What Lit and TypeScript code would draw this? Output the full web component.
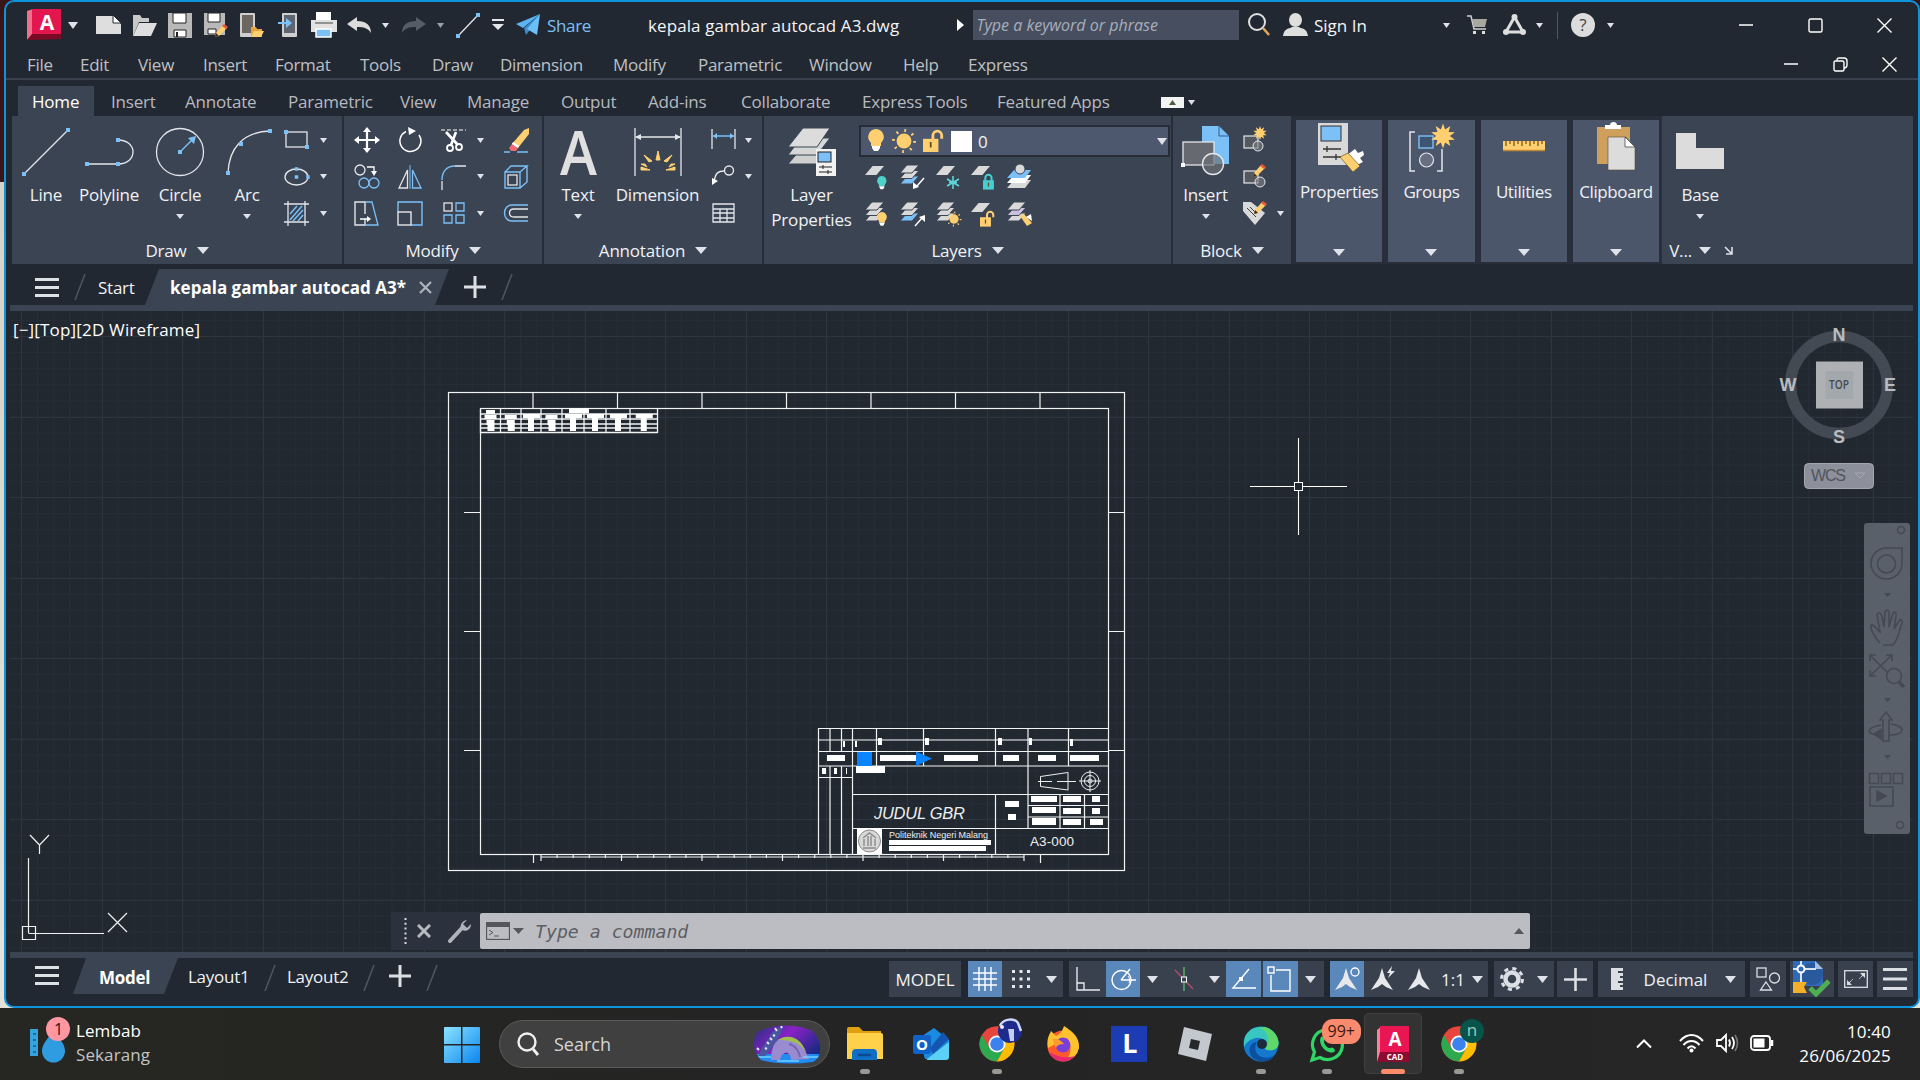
import { LitElement, html, svg, css, nothing } from 'lit';
import { customElement } from 'lit/decorators.js';

const BLUE = '#7cc0f8';
const WHITE = '#e4e6ea';
const GOLD = '#ffcf70';

const icon = (w: number, h: number, body: unknown) => html`
  <svg class="icon" width=${w} height=${h} viewBox="0 0 ${w} ${h}" fill="none" stroke-linecap="butt">${body}</svg>
`;

const caret = (w = 8, h = 5, color = '#dfe2e8') => icon(w, h, svg`<path d="M0 0H${w}L${w / 2} ${h}Z" fill=${color}/>`);

const dots = (points: number[][], size = 4) =>
  points.map(([x, y]) => svg`<rect x=${x - size / 2} y=${y - size / 2} width=${size} height=${size} fill=${BLUE}/>`);

const sheet = (x: number, y: number, w: number, h: number, fill = '#d9d9d9') =>
  svg`<path d="M${x + w * 0.4} ${y}H${x + w}L${x + w * 0.6} ${y + h}H${x}Z" fill=${fill}/>`;

const stack = (fills: string[], y = 1) =>
  [...fills].reverse().map((fill, i) => {
    const top = y + (fills.length - 1 - i) * 5.5;
    return svg`<path d="M8 ${top}H20L13 ${top + 8}H1Z" fill=${fill} stroke="#3b4453" stroke-width="1"/>`;
  });

const pencil = (x: number, y: number, s = 1) => svg`
  <g transform="translate(${x} ${y}) scale(${s})">
    <path d="M0 13L1 9L8 1L12 4L4 12Z" fill=${GOLD}/><path d="M7 2L9 0L13 3L11 5Z" fill="#e8583a"/><path d="M0 13L1 9L4 12Z" fill="#3a2c20"/>
  </g>`;

const star = (cx: number, cy: number, r: number) => {
  const pts = Array.from({ length: 20 }, (_, i) => {
    const a = (i * Math.PI) / 10 - Math.PI / 2;
    const d = i % 2 ? r * 0.55 : r;
    return `${cx + Math.cos(a) * d},${cy + Math.sin(a) * d}`;
  });
  return svg`<polygon points=${pts.join(' ')} fill=${GOLD}/>`;
};

const sun = (cx: number, cy: number, r: number) => svg`
  <circle cx=${cx} cy=${cy} r=${r * 0.62} fill=${GOLD}/>
  <circle cx=${cx} cy=${cy} r=${r * 0.88} stroke=${GOLD} stroke-width=${r * 0.24} stroke-dasharray="${r * 0.15} ${r * 0.541}"/>`;

const bulb = (x: number, y: number, s: number, fill: string) => svg`
  <g transform="translate(${x} ${y}) scale(${s})">
    <path d="M8 0a8 8 0 0 1 5 14v3H3v-3A8 8 0 0 1 8 0Z" fill=${fill}/><path d="M4 17h8v2l-2 3H6l-2-3Z" fill="#fff"/>
  </g>`;

const lock = (x: number, y: number, s: number, fill: string, open: boolean) => svg`
  <g transform="translate(${x} ${y}) scale(${s})">
    <path d=${open ? 'M9 9V5a4 4 0 0 1 8 0v3' : 'M3 9V5a4 4 0 0 1 8 0v4'} stroke=${fill} stroke-width="2.6"/>
    <rect y="8" width="14" height="12" fill=${fill}/><path d="M7 11v5" stroke="#5b4a2a" stroke-width="1.6"/>
  </g>`;

const ICONS = {
  appLogo: icon(34, 32, svg`
    <path d="M0 2L6 0V25L0 31Z" fill="#f0708c"/><path d="M5 0H34V26H5Z" fill="#e4164e"/><path d="M5 25H34V30L5 31H0Z" fill="#7a0a26"/>
    <text class="logo-a" x="20" y="21" text-anchor="middle" fill="#fff" font-size="21">A</text>`),
  newFile: icon(25, 20, svg`<path d="M0 1H17L25 9V19H0Z" fill="#dedede"/><path d="M17 0L25 8H17Z" fill="#fff" stroke="#222831"/>`),
  open: icon(25, 22, svg`<path d="M1 22V1H8L10 4H17V8H7Z" fill="#c8c8c8"/><path d="M7 9H25L19 22H1Z" fill="#dedede"/>`),
  save: icon(24, 25, svg`<path d="M0 0H24V25H0Z" fill="#b9b9b9"/><path d="M5 0H18V10H5Z" fill="#fff" stroke="#222"/><path d="M6 17H18V24H6Z" fill="#fff" stroke="#222"/><path d="M9 19v5" stroke="#222" stroke-width="2"/>`),
  saveAs: icon(25, 25, svg`<path d="M0 0H21V22H0Z" fill="#b9b9b9"/><path d="M4 0H16V9H4Z" fill="#fff" stroke="#222"/><path d="M4 16H12V21H4Z" fill="#fff" stroke="#222"/>${pencil(11, 11)}`),
  mobileOpen: icon(24, 25, svg`<rect width="15" height="24" rx="1" fill="#cfcfcf"/><rect x="2" y="2" width="11" height="18" fill="#6c6663"/><path d="M11 14H16L17 16H22V24H11Z" fill="#e8a33a"/><path d="M14 18H24L21 24H11Z" fill="#ffcf70"/>`),
  mobileSave: icon(20, 24, svg`<rect x="4" width="15" height="24" rx="1" fill="#cfcfcf"/><rect x="6" y="2" width="11" height="18" fill="#5e6470"/><path d="M0 9H8V5L14 10L8 15V11H0Z" fill=${BLUE}/>`),
  plot: icon(26, 26, svg`<path d="M5 0H20V8H5Z" fill="#fff"/><path d="M0 8H26V20H0Z" fill="#e2e2e2"/><path d="M4 11H22" stroke="#444"/><path d="M5 17H20V25H5Z" fill=${BLUE} stroke="#fff" stroke-width="1.5"/>`),
  undo: icon(25, 17, svg`<path d="M0 7L10 0V4C19 4 24 8 24 16C21 11 17 10 10 10V14Z" fill="#dcdcdc"/>`),
  redo: icon(25, 17, svg`<path d="M25 7L15 0V4C6 4 1 8 1 16C4 11 8 10 15 10V14Z" fill="#565c65"/>`),
  lineSmall: icon(25, 25, svg`<path d="M2 23L22 2" stroke=${WHITE} stroke-width="1.3"/>${dots([[2, 23], [22, 2]])}`),
  more: icon(12, 12, svg`<path d="M0 1H12" stroke=${WHITE} stroke-width="2"/><path d="M0 5H12L6 11Z" fill=${WHITE}/>`),
  plane: icon(24, 22, svg`<path d="M24 0L0 10L7 14Z" fill="#5cb4f2"/><path d="M24 0L8 14L10 21L13 17Z" fill="#3c8fd0"/><path d="M24 0L21 21L11 15Z" fill="#6cc0f8"/>`),
  flyout: icon(7, 12, svg`<path d="M0 0L7 6L0 12Z" fill="#fff"/>`),
  search: icon(22, 24, svg`<circle cx="9" cy="9" r="8" stroke="#e0e0e0" stroke-width="2"/><path d="M15 15L21 22" stroke="#e0a95a" stroke-width="2.5"/>`),
  user: icon(25, 24, svg`<ellipse cx="12.500" cy="7" rx="6.500" ry="7" fill="#dedede"/><path d="M0 23C1 15 6 16 9 14H16C19 16 24 15 25 23Z" fill="#dedede"/>`),
  cart: icon(21, 20, svg`<path d="M0 1H4L7 14H19" stroke="#cfcfcf" stroke-width="1.5"/><path d="M5 4H20L18 12H7Z" fill="#a8a8a0"/><rect x="6" y="16" width="3" height="3" fill="#ddd"/><rect x="15" y="16" width="3" height="3" fill="#ddd"/>`),
  appStore: icon(23, 22, svg`<path d="M11.500 3L3 18H20Z" stroke="#dedede" stroke-width="3"/><circle cx="11.500" cy="3" r="3" fill="#dedede"/><circle cx="3" cy="18" r="3" fill="#dedede"/><circle cx="20" cy="18" r="3" fill="#dedede"/>`),
  help: icon(24, 24, svg`<circle cx="12" cy="12" r="12" fill="#dcdcdc"/><text x="12" y="18" text-anchor="middle" font-size="17" fill="#444">?</text>`),
  min: icon(14, 2, svg`<path d="M0 1H14" stroke="#fff" stroke-width="1.6"/>`),
  max: icon(15, 15, svg`<rect x="1" y="1" width="13" height="13" rx="1.500" stroke="#fff" stroke-width="1.4"/>`),
  close: icon(15, 15, svg`<path d="M.5 .5L14.500 14.500M14.500 .5L.5 14.500" stroke="#fff" stroke-width="1.4"/>`),
  restore: icon(15, 15, svg`<rect x="1" y="4" width="10" height="10" rx="1.500" stroke="#fff" stroke-width="1.4"/><path d="M4 3.500C4 1 5 1 6 1H11C13 1 14 2 14 4V8C14 10 13 11 11 11" stroke="#fff" stroke-width="1.4"/>`),

  line: icon(52, 52, svg`<path d="M4 48L48 4" stroke=${WHITE} stroke-width="1.3"/>${dots([[4, 48], [48, 4]])}`),
  polyline: icon(52, 52, svg`<path d="M4 38H35C45 38 50 32 50 26S45 14 35 14" stroke=${WHITE} stroke-width="1.3"/>${dots([[4, 38], [35, 38], [35, 14]])}`),
  circle: icon(52, 52, svg`<circle cx="26" cy="26" r="23.500" stroke=${WHITE} stroke-width="1.3"/><path d="M26 26L38 14" stroke=${BLUE} stroke-width="1.5"/><path d="M34 12L42 10L40 18Z" fill=${BLUE}/>${dots([[26, 26]])}`),
  arc: icon(52, 52, svg`<path d="M7 47C8 22 22 6 49 5" stroke=${WHITE} stroke-width="1.3"/>${dots([[7, 47], [20, 18], [49, 5]])}`),
  rect: icon(28, 28, svg`<rect x="3" y="6" width="21" height="15" stroke=${WHITE} stroke-width="1.3"/>${dots([[3, 6], [24, 21]])}`),
  ellipse: icon(28, 28, svg`<ellipse cx="13.500" cy="14" rx="11.500" ry="8" stroke=${WHITE} stroke-width="1.3"/>${dots([[13.5, 6], [13.5, 14], [25, 14]], 3.5)}`),
  hatch: icon(28, 28, svg`<path d="M1 5H26M1 23H26M5 2V27M22 2V27" stroke=${WHITE} stroke-width="1.3"/><path d="M7 15L14 7M7 21L19 7M10 22L20 11M15 22L20 16" stroke=${BLUE} stroke-width="1.5"/>`),
  move: icon(26, 26, svg`<path d="M13 2V24M2 13H24" stroke="#fff" stroke-width="2.2"/><path d="M9 5L13 0L17 5ZM9 21L13 26L17 21ZM5 9L0 13L5 17ZM21 9L26 13L21 17Z" fill="#fff"/>`),
  rotate: icon(26, 26, svg`<path d="M9 4.500A10.500 10.500 0 1 0 22 8" stroke="#fff" stroke-width="1.5"/><path d="M11 0L19 4L12 8Z" fill="#fff"/>`),
  trim: icon(26, 26, svg`<path d="M0 3H25" stroke="#fff" stroke-dasharray="4 2"/><path d="M5 5L17 18M15 5L10 18" stroke="#fff" stroke-width="2.6"/><circle cx="9" cy="21" r="3" stroke="#fff" stroke-width="1.8"/><circle cx="18" cy="20" r="3" stroke="#fff" stroke-width="1.8"/>`),
  erase: icon(26, 26, svg`<path d="M9 17L21 3L26 1V7L15 21Z" fill=${GOLD}/><path d="M9 17L15 21L13 24H8L6 21Z" fill="#ef6a72"/><path d="M9.500 16L15.500 20" stroke="#fff" stroke-width="2.500"/><path d="M1 25H7M14 25H25" stroke=${BLUE} stroke-width="1.4"/>`),
  copy: icon(26, 26, svg`<circle cx="6" cy="6" r="5" stroke=${WHITE} stroke-width="1.3"/><circle cx="10" cy="19" r="5" stroke=${BLUE} stroke-width="1.3"/><circle cx="20" cy="19" r="5" stroke=${BLUE} stroke-width="1.3"/><path d="M13 3H20V8" stroke="#fff" stroke-width="1.3"/><path d="M17 7H23L20 12Z" fill="#fff"/>`),
  mirror: icon(26, 26, svg`<path d="M10.500 6V24H2Z" stroke=${WHITE} stroke-width="1.3"/><path d="M15.500 6V24H24Z" stroke=${BLUE} stroke-width="1.3"/><path d="M13 1V25" stroke=${BLUE}/>`),
  fillet: icon(26, 26, svg`<path d="M1 26V17M14 2H25" stroke=${WHITE} stroke-width="1.3"/><path d="M1 16C1 7 6 2 14 2" stroke=${BLUE} stroke-width="1.4"/>`),
  cube: icon(26, 26, svg`<path d="M2 8H17V24H2ZM2 8L8 2H24L17 8M24 2V18L17 24" stroke=${BLUE} stroke-width="1.4"/><rect x="5" y="11" width="9" height="10" stroke=${WHITE} stroke-width="1.3"/>`),
  stretch: icon(26, 26, svg`<path d="M11 19V25H1V2H11V14" stroke=${WHITE} stroke-width="1.4"/><path d="M11 2H18L24 25H11" stroke=${BLUE} stroke-width="1.3"/><path d="M6 19H15" stroke="#fff" stroke-width="1.3"/><path d="M13 16L17 19L13 22Z" fill="#fff"/>`),
  scale: icon(26, 26, svg`<path d="M1 12V2H25V25H14" stroke=${BLUE} stroke-width="1.4"/><rect x="1" y="12" width="13" height="13" stroke=${WHITE} stroke-width="1.4"/>`),
  array: icon(26, 26, svg`<rect x="3" y="3" width="8" height="8" stroke=${WHITE} stroke-width="1.3"/><path d="M15 3H23V11H15ZM3 15H11V23H3ZM15 15H23V23H15Z" stroke=${BLUE} stroke-width="1.3"/>`),
  offset: icon(26, 26, svg`<path d="M25 5H9C-1 5 -1 21 9 21H25" stroke=${BLUE} stroke-width="1.4"/><path d="M25 9H11C5 9 5 17 11 17H25" stroke=${WHITE} stroke-width="1.3"/>`),
  dimension: icon(52, 52, svg`<path d="M3 2V50M49 2V50M4 11H48" stroke=${WHITE} stroke-width="1.3"/><path d="M3 11L9 8V14ZM49 11L43 8V14Z" fill=${WHITE}/>
    <path d="M24 34L26 25L28 34ZM17 36L12 29L20 35ZM35 36L40 29L32 35ZM15 41L9 38L13 38ZM37 41L43 38L39 38ZM18 44H9V41ZM34 44H43V41Z" fill=${GOLD} stroke=${GOLD}/>`),
  dimSmall: icon(28, 26, svg`<path d="M3 2V22M26 2V22" stroke=${WHITE} stroke-width="1.3"/><path d="M4 9H25" stroke=${BLUE} stroke-width="1.3"/><path d="M4 9L8 6V12ZM25 9L21 6V12Z" fill=${BLUE}/>`),
  leader: icon(28, 26, svg`<path d="M5 19C6 8 10 7 15 7" stroke=${WHITE} stroke-width="1.4"/><circle cx="20" cy="6.500" r="4.500" stroke=${WHITE} stroke-width="1.4"/><path d="M3 21V14L9 17Z" fill="#fff"/>`),
  table: icon(28, 26, svg`<path d="M4 4H25V22H4ZM4 9H25M4 13H25M4 18H25M11 9V22M18 9V22" stroke=${WHITE} stroke-width="1.3"/>`),
  layerProps: icon(52, 52, svg`
    <path d="M15 23H44L31 38H2Z" fill="#cfcfcf" stroke="#3b4453"/><path d="M15 12H44L31 29H2Z" fill="#d6d6d6" stroke="#3b4453"/><path d="M17 2H44L31 21H2Z" fill="#dcdcdc" stroke="#3b4453"/>
    <rect x="30" y="23" width="20" height="27" fill="#f2f2f2"/><rect x="32" y="26" width="13" height="10" fill=${BLUE} stroke="#222"/><path d="M33 41H46M33 46H46M37 39V43M42 44V48" stroke="#222"/>`),
  insert: icon(52, 52, svg`
    <path d="M22 0H39L49 10V38H22Z" fill=${BLUE}/><path d="M39 0V10H49" stroke="#2a5f8f"/><rect x="3" y="16" width="31" height="23" fill="#66696f" stroke=${WHITE} stroke-width="1.3"/>
    <circle cx="33" cy="38" r="10.500" fill="#6d7077b0" stroke=${WHITE} stroke-width="1.4"/><rect x="1" y="37" width="4" height="4" fill="#fff"/>`),
  properties: icon(52, 52, svg`
    <path d="M5 1H35V43H5Z" fill="#d9d9d9"/><rect x="8" y="4" width="20" height="15" fill=${BLUE} stroke="#333"/><path d="M10 27H28M14 24V30M10 35H28M23 32V38" stroke="#333" stroke-width="1.3"/>
    <path d="M34 33L42 27L45 31L50 29L51 33L47 36L50 40L44 43Z" fill="#fff"/><path d="M27 35L35 31L47 44L40 50Z" fill=${GOLD} stroke="#6b5520" stroke-width=".7"/>`),
  groups: icon(52, 52, svg`
    <path d="M10 10H5V49H10M32 49H37V27" stroke=${WHITE} stroke-width="1.5"/><rect x="14" y="14" width="14" height="12" stroke=${BLUE} stroke-width="1.4" fill="#3e5470"/>
    <circle cx="21.500" cy="38" r="7" fill="#676f80" stroke=${WHITE} stroke-width="1.2"/>${star(38, 14, 12.5)}`),
  utilities: icon(52, 52, svg`<rect x="5" y="19" width="42" height="10" fill=${GOLD}/><path d="M5 28.500H47" stroke="#c08a34" stroke-width="1.5"/><path d="M8 19v5M12 19v3M16 19v5M20 19v3M24 19v5M28 19v3M32 19v5M36 19v3M40 19v5M44 19v3" stroke="#6b4b10" stroke-width="1.2"/>`),
  clipboard: icon(52, 52, svg`<path d="M7 5H40V42H7Z" fill="#cf9f5c"/><path d="M15 7V3H20C20 -1 27 -1 27 3H31V7Z" fill="#fff"/><path d="M18 15H36L45 25V48H18Z" fill="#dcdcdc" stroke="#5a4a3a" stroke-width=".6"/><path d="M35 15L45 25H35Z" fill="#fff" stroke="#333" stroke-width=".7"/>`),
  base: icon(52, 52, svg`<path d="M2 7H22V22H50V43H2Z" fill="#dcdcdc"/>`),
  blockNew: icon(28, 28, svg`<rect x="3" y="10" width="14" height="12" fill="#55585e" stroke=${WHITE} stroke-width="1.2"/><circle cx="17" cy="20" r="5" fill="#7a7d83a0" stroke=${WHITE}/>${star(19, 7, 7)}`),
  blockEdit: icon(28, 28, svg`<rect x="3" y="8" width="14" height="12" fill="#55585e" stroke=${WHITE} stroke-width="1.2"/><circle cx="19" cy="19" r="5" fill="#7a7d83a0" stroke=${WHITE}/>${pencil(12, 1)}`),
  blockAttr: icon(28, 28, svg`<path d="M2 3H10L24 14L14 26L2 12Z" fill="#d9d9d9"/><path d="M6 9L15 18M9 8L14 13" stroke="#444"/>${pencil(13, 2)}`),
};

const LAYER_TOOLS = [
  svg`${sheet(1, 2, 19, 9)}${bulb(13, 12, 0.6, '#4fd0c8')}`,
  svg`${stack(['#d9d9d9', '#d9d9d9', BLUE])}<path d="M25 14L18 22" stroke="#fff" stroke-width="1.5"/><path d="M14 25V18L20 23Z" fill="#fff"/>`,
  svg`${sheet(1, 2, 19, 9)}<path d="M18 12V25M12 15L24 22M24 15L12 22M14 18.500H22" stroke="#5fd4d4" stroke-width="1.6"/>`,
  svg`${sheet(1, 2, 19, 9)}${lock(13, 10, 0.78, '#45cfd0', false)}`,
  svg`<path d="M8 16H25L19 24H1Z" fill="#d9d9d9"/><path d="M8 11H25L19 19H1Z" fill="#fff"/><path d="M8 6H25L19 14H1Z" fill=${BLUE}/><circle cx="14" cy="5" r="5" fill="#d9d9d9" stroke="#3b4453"/>`,
  svg`${stack(['#d9d9d9', '#d9d9d9', '#d9d9d9'])}${bulb(13, 11, 0.62, GOLD)}`,
  svg`${stack(['#d9d9d9', '#d9d9d9', BLUE])}<path d="M16 25L23 17" stroke="#fff" stroke-width="1.5"/><path d="M20 16L26 14V21Z" fill="#fff"/>`,
  svg`${stack(['#d9d9d9', '#d9d9d9', '#d9d9d9'])}${sun(19, 18, 7.5)}`,
  svg`${sheet(1, 2, 19, 9)}${lock(10, 10, 0.78, GOLD, true)}`,
  svg`${stack(['#d9d9d9', '#cdbfe0', '#d9d9d9'])}<path d="M14 15L18 13L26 22L21 25Z" fill=${GOLD}/><path d="M20 16L25 13L26 20Z" fill="#fff"/>`,
];

const MENU = ['File', 'Edit', 'View', 'Insert', 'Format', 'Tools', 'Draw', 'Dimension', 'Modify', 'Parametric', 'Window', 'Help', 'Express'];
const RIBBON_TABS = ['Home', 'Insert', 'Annotate', 'Parametric', 'View', 'Manage', 'Output', 'Add-ins', 'Collaborate', 'Express Tools', 'Featured Apps'];

@customElement('title-bar')
class TitleBar extends LitElement {
  static styles = css`
    :host { display: block; font: 17px "Open Sans", sans-serif; color: #f4f5f7; }
    .icon { display: block; flex: none; }
    .logo-a { font: bold 21px "Open Sans", sans-serif; }
    .bar {
      display: grid;
      height: 46px;
      padding-left: 18px;
      align-items: center;
      justify-items: center;
      grid-template-columns:
        40px 18px 44px 36px 36px 36px 36px 36px 36px 35px 16px 41px 12px 44px 16px
        142px 301px 23px 267px 40px 155px 24px 38px 36px 14px 23px 28px 26px 92px 62px 76px 62px;
    }
    .bar > .icon:nth-child(3) { margin-left: 8px; }
    .share { display: flex; gap: 7px; align-items: center; color: #7cc0f8; justify-self: start; padding-left: 10px; letter-spacing: -.35px; }
    .file { justify-self: start; letter-spacing: .1px; white-space: nowrap; }
    .search {
      box-sizing: border-box;
      width: 266px;
      height: 30px;
      padding-left: 4px;
      background: #464e60;
      color: #a9aeba;
      font-style: italic;
      font-size: 16px;
      line-height: 30px;
      letter-spacing: 0;
    }
    .user { display: flex; gap: 6px; align-items: center; justify-self: start; padding-left: 4px; letter-spacing: 0; }
    .sep { width: 1px; height: 27px; background: #50565f; }
    .menu {
      box-sizing: border-box;
      display: grid;
      height: 32px;
      padding: 2px 4px 0 21px;
      align-items: center;
      border-bottom: 2px solid #3a4250;
      color: #bdc0c5;
      letter-spacing: -.28px;
      grid-template-columns: 53px 58px 65px 72px 85px 72px 68px 113px 85px 111px 94px 65px 1fr 49px 49px 32px;
    }
  `;

  render() {
    const i = ICONS;
    return html`
      <div class="bar">
        ${i.appLogo}${caret(10, 7)}${i.newFile}${i.open}${i.save}${i.saveAs}${i.mobileOpen}${i.mobileSave}${i.plot}
        ${i.undo}${caret(7, 5)}${i.redo}${caret(7, 5, '#9ba0a8')}${i.lineSmall}${i.more}
        <span class="share">${i.plane}Share</span>
        <span class="file">kepala gambar autocad A3.dwg</span>
        ${i.flyout}
        <div class="search">Type a keyword or phrase</div>
        ${i.search}
        <span class="user">${i.user}Sign In</span>
        ${caret(7, 5)}${i.cart}${i.appStore}${caret(7, 5)}<span class="sep"></span>${i.help}${caret(7, 5)}
        <span></span>${i.min}${i.max}${i.close}
      </div>
      <div class="menu">
        ${MENU.map((m) => html`<span>${m}</span>`)}${i.min}${i.restore}${i.close}
      </div>
    `;
  }
}

@customElement('ribbon-bar')
class RibbonBar extends LitElement {
  static styles = css`
    :host { display: block; font: 17px "Open Sans", sans-serif; color: #f0f2f5; letter-spacing: -.2px; }
    .icon { display: block; flex: none; }
    .tabs {
      display: grid;
      height: 36px;
      padding-left: 12px;
      align-items: end;
      color: #b6bac0;
      grid-template-columns: 86px 74px 103px 112px 67px 94px 87px 93px 121px 135px 171px 24px 18px;
    }
    .tab { height: 30px; line-height: 31px; padding-left: 7px; white-space: nowrap; }
    .tab.active { width: 76px; box-sizing: border-box; padding-left: 14px; background: #3b4453; color: #fff; }
    .collapse { display: grid; place-items: center; width: 23px; height: 11px; margin-bottom: 8px; background: #f3f3f3; }
    .tab-caret { padding: 0 0 11px 3px; }
    .panels { display: flex; height: 148px; margin-left: 6px; width: 1901px; background: #3b4453; }
    .panel { box-sizing: border-box; display: flex; flex-direction: column; height: 148px; border-right: 2px solid #262d38; }
    .body { display: flex; height: 116px; padding-top: 6px; }
    .foot { display: flex; gap: 10px; align-items: center; justify-content: center; height: 28px; padding-top: 1px; }
    .big { display: flex; flex-direction: column; align-items: center; flex: none; text-align: center; line-height: 25px; }
    .big .icon:first-child { margin: 4px 0; }
    .big .label { white-space: nowrap; }
    .big .arrow { margin-top: 3px; }
    .letter { height: 60px; font-size: 62px; line-height: 58px; font-weight: 600; color: #e0e0e0; transform: scaleX(.9); }
    .tools { display: grid; grid-auto-rows: 36.5px; align-items: center; justify-items: center; }
    .draw { grid-template-columns: 50px 2px; }
    .modify { grid-template-columns: 46px 40px 47px 6px 65px; }
    .notes { grid-template-columns: 39px 12px; }
    .layers { display: flex; flex-direction: column; }
    .layers .tools { grid-template-columns: repeat(5, 35.5px); padding-left: 1px; }
    .blocks { grid-template-columns: 33px 18px; }
    .combo {
      box-sizing: border-box;
      display: flex;
      gap: 6.500px;
      align-items: center;
      width: 311px;
      height: 32px;
      margin: 3px 0 3px;
      padding: 0 1px 0 6px;
      background: #4d586e;
      border: 2px solid #262d38;
    }
    .swatch { width: 21px; height: 21px; background: #fff; }
    .combo .end { margin-left: auto; }
    .closed {
      box-sizing: border-box;
      display: flex;
      flex-direction: column;
      align-items: center;
      width: 92.300px;
      height: 148px;
      padding-top: 2px;
      border: 3px solid #282f3b;
      border-width: 4px 3px 2px;
      background: #4b566a;
    }
    .closed .label { margin: 6px 0 auto; line-height: 24px; letter-spacing: -.4px; }
    .closed .arrow { margin-bottom: 6px; }
    .last { border: 0; }
    .last .foot { justify-content: flex-start; padding-left: 7px; gap: 7px; }
    .last .foot .icon + .icon { margin-left: 6px; }
  `;

  big(image: unknown, lines: string[], width: number, arrow = false) {
    return html`
      <div class="big" style="width:${width}px">
        ${image}
        ${lines.map((l) => html`<span class="label">${l}</span>`)}
        ${arrow ? html`<span class="arrow">${caret(8, 5)}</span>` : nothing}
      </div>
    `;
  }

  panel(width: number, title: string, body: unknown) {
    return html`
      <section class="panel" style="width:${width}px">
        <div class="body">${body}</div>
        <div class="foot"><span>${title}</span>${caret(12, 7)}</div>
      </section>
    `;
  }

  render() {
    const i = ICONS;
    const c = caret(7, 5);
    const e = html`<span></span>`;
    return html`
      <div class="tabs">
        ${RIBBON_TABS.map((t) => html`<span class="tab ${t === 'Home' ? 'active' : ''}">${t}</span>`)}
        <span class="collapse">${icon(7, 5, svg`<path d="M0 5L3.500 0L7 5Z" fill="#4a5a3a"/>`)}</span>
        <span class="tab-caret">${caret(7, 5)}</span>
      </div>
      <div class="panels">
        ${this.panel(332, 'Draw', html`
          ${this.big(i.line, ['Line'], 68)}${this.big(i.polyline, ['Polyline'], 58)}
          ${this.big(i.circle, ['Circle'], 84, true)}${this.big(i.arc, ['Arc'], 50, true)}
          <div class="tools draw">${i.rect}${c}${i.ellipse}${c}${i.hatch}${c}</div>
        `)}
        ${this.panel(200, 'Modify', html`
          <div class="tools modify">
            ${i.move}${i.rotate}${i.trim}${c}${i.erase}
            ${i.copy}${i.mirror}${i.fillet}${c}${i.cube}
            ${i.stretch}${i.scale}${i.array}${c}${i.offset}
          </div>
        `)}
        ${this.panel(220, 'Annotation', html`
          ${this.big(html`<span class="letter">A</span>`, ['Text'], 68, true)}${this.big(i.dimension, ['Dimension'], 91)}
          <div class="tools notes">${i.dimSmall}${c}${i.leader}${c}${i.table}${e}</div>
        `)}
        ${this.panel(409, 'Layers', html`
          ${this.big(i.layerProps, ['Layer', 'Properties'], 95)}
          <div class="layers">
            <div class="combo">
              ${icon(18, 24, bulb(1, 0, 1, GOLD))}${icon(24, 24, sun(12, 12, 12))}${icon(22, 24, lock(1, 1, 1.1, GOLD, true))}
              <span class="swatch"></span><span>0</span><span class="end">${caret(10, 7)}</span>
            </div>
            <div class="tools">${LAYER_TOOLS.map((t) => icon(28, 28, t))}</div>
          </div>
        `)}
        ${this.panel(120, 'Block', html`
          ${this.big(i.insert, ['Insert'], 65, true)}
          <div class="tools blocks">${i.blockNew}${e}${i.blockEdit}${e}${i.blockAttr}${c}</div>
        `)}
        ${[['Properties', i.properties], ['Groups', i.groups], ['Utilities', i.utilities], ['Clipboard', i.clipboard]].map(
          ([label, image]) => html`
            <div class="closed">${image}<span class="label">${label}</span><span class="arrow">${caret(12, 7)}</span></div>
          `
        )}
        <section class="panel last" style="width:90px">
          <div class="body">${this.big(i.base, ['Base'], 76, true)}</div>
          <div class="foot"><span>V...</span>${caret(12, 7)}${icon(9, 9, svg`<path d="M1 1L8 8M8 1V8H2" stroke="#dfe2e8" stroke-width="1.6"/>`)}</div>
        </section>
      </div>
    `;
  }
}

const TABLE_COLS = [480.5, 500.5, 521, 541, 562, 584, 606, 630, 657.5];

@customElement('drawing-canvas')
class DrawingCanvas extends LitElement {
  static styles = css`
    :host { position: relative; display: block; height: 641px; background: #212830; overflow: hidden; }
    .model { display: block; }
    .model text { font-family: "Liberation Sans", sans-serif; fill: #eceef0; }
    .model .tag { font: 17px "Open Sans", sans-serif; fill: #fff; }
    .model .compass { font-weight: 700; font-size: 18px; fill: #b9bcc1; text-anchor: middle; }
    .model .face { font: 600 12px "Open Sans", sans-serif; fill: #45484d; text-anchor: middle; }
    .model .ucs { fill: #50545d; }
    .command {
      position: absolute;
      left: 385px;
      bottom: 2px;
      display: grid;
      grid-template-columns: 28px 10px 51px 1050px;
      align-items: center;
      justify-items: center;
      height: 38px;
      background: linear-gradient(to right, #2b323e 89px, transparent 89px);
    }
    .icon { display: block; }
    .command > .icon:nth-child(3) { margin-left: 10px; }
    .input {
      box-sizing: border-box;
      display: flex;
      align-items: center;
      width: 1050px;
      height: 36px;
      padding: 0 6px;
      background: #bcbdc2;
      border-radius: 2px;
      color: #5c5e63;
      font: italic 18.200px "DejaVu Sans Mono", monospace;
    }
    .input .drop { margin: 0 11px 0 3px; }
    .input .up { margin-left: auto; }
  `;

  grid() {
    return svg`
      <defs>
        <pattern id="minor" x="21" y="336" width="16.1" height="16.1" patternUnits="userSpaceOnUse">
          <path d="M.5 0V16.100M0 .5H16.100" stroke="#262d37"/>
        </pattern>
      </defs>
      <rect x="10" y="311" width="1903" height="641" fill="url(#minor)"/>
      ${Array.from({ length: 24 }, (_, k) => svg`<path d="M${Math.round(21 + k * 80.5) + 0.5} 311V952" stroke="#2d3541"/>`)}
      ${Array.from({ length: 8 }, (_, k) => svg`<path d="M10 ${Math.round(336 + k * 80.5) + 0.5}H1913" stroke="#2d3541"/>`)}
    `;
  }

  sheetFrame() {
    return svg`
      <g stroke="#f2f3f4" stroke-width="1.2" fill="none">
        <rect x="448.500" y="392.500" width="676" height="478"/>
        <rect x="480.500" y="408.500" width="628" height="446"/>
        ${[533, 617.5, 702, 786.5, 871, 955.5, 1040].map((x) => svg`<path d="M${x} 392V408"/>`)}
        ${[512.5, 631.5, 750.5].map((y) => svg`<path d="M464 ${y}H480M1108 ${y}H1124"/>`)}
        <path d="M533.500 855V863M1040.500 855V863M541 857H1024"/>
        ${Array.from({ length: 31 }, (_, k) => svg`<path d="M${541 + k * 16.1} 854V${k % 5 ? 858 : 861}"/>`)}
      </g>
      <g stroke="#f2f3f4" stroke-width="1.3" fill="none">
        ${[414, 419, 424, 428, 432.5].map((y) => svg`<path d="M480 ${y}H657.500"/>`)}
        ${TABLE_COLS.map((x) => svg`<path d="M${x} 409V433"/>`)}
      </g>
      <g fill="#fff">
        <rect x="569" y="408" width="20" height="5"/>
        <rect x="486" y="410" width="9" height="4"/>
        ${TABLE_COLS.slice(0, -1).map((x, k) => {
          const mid = (x + TABLE_COLS[k + 1]) / 2;
          return k === 0 || k === 1 || k === 3
            ? svg`<rect x=${mid - 6} y="415" width="12" height="4"/><rect x=${mid - 4} y="420" width="8" height="5"/><rect x=${mid - 3} y="425" width="7" height="6"/>`
            : svg`<rect x=${mid - 8} y="414" width="17" height="4"/><rect x=${mid - 3} y="417" width="6" height="14"/>`;
        })}
      </g>
    `;
  }

  titleBlock() {
    const marks = [
      [843, 741, 2, 6], [855, 741, 2, 6], [878, 738, 4, 7], [925, 738, 4, 7], [998, 738, 4, 7], [1029, 738, 3, 7], [1070, 739, 3, 7],
      [827, 755, 18, 6], [880, 755, 37, 6], [944, 755, 34, 6], [1003, 755, 16, 6], [1038, 755, 18, 6], [1070, 755, 29, 6],
      [822, 768, 4, 6], [834, 768, 3, 6], [846, 768, 1, 6], [856, 766, 29, 7], [1005, 801, 14, 6], [1008, 814, 8, 6],
      [1031, 796, 26, 6], [1063, 796, 18, 6], [1092, 796, 8, 6], [1032, 807, 24, 6], [1063, 808, 18, 6], [1092, 808, 8, 6],
      [1032, 818, 24, 7], [1063, 819, 18, 6], [1090, 819, 13, 6], [889, 840, 102, 5], [889, 846, 97, 5],
    ];
    return svg`
      <path fill="none" stroke="#f2f3f4" stroke-width="1.2" d="
        M818.500 854V728.500H1108.500M818.500 740H1108.500M818.500 751.500H1108.500M818.500 766H1108.500M818.500 777.500H852.500
        M852.500 794.500H1108.500M852.500 828.500H1108.500M1028 805.500H1108.500M1028 817H1108.500
        M830 728V751.500M841.500 728V751.500M830 766V854M841.500 766V854M852.500 728V854
        M876.500 728V766M923.500 728V766M995.500 728V766M1068.500 728V766M1028 728V828.500M995.500 794.500V854M1060 794.500V828.500M1084.500 794.500V828.500"/>
      ${marks.map(([x, y, w, h]) => svg`<rect x=${x} y=${y} width=${w} height=${h} fill="#fff"/>`)}
      <rect x="857" y="752" width="15" height="14" fill="#0a84ff"/>
      <path d="M916 751.500L932 758.500L916 766Z" fill="#0a84ff"/>
      <g fill="none" stroke="#eceef0">
        <path d="M1040.500 776.500V786.500L1068 790V772.500ZM1038 781.500H1052M1057 781.500H1076"/>
        <circle cx="1090" cy="781" r="9"/><circle cx="1090" cy="781" r="5.500"/><circle cx="1090" cy="781" r="2"/><path d="M1079 781H1101M1090 770V792"/>
      </g>
      <text x="874" y="819" font-size="16.500" font-style="italic" textLength="91">JUDUL GBR</text>
      <text x="889" y="838" font-size="9" textLength="99">Politeknik Negeri Malang</text>
      <text x="1030" y="846" font-size="13.500" textLength="44">A3-000</text>
      <rect x="857" y="828" width="25" height="26" fill="#fff"/>
      <circle cx="869.500" cy="841" r="11" fill="#d8d8d8" stroke="#888"/>
      <path d="M863 848H876M864 846V839M868 846V836M871 846V836M875 846V839M863 838L869.500 833L876 838" stroke="#8a8a8a" stroke-width="1.4" fill="none"/>
    `;
  }

  viewTools() {
    return svg`
      <g>
        <circle cx="1839" cy="385" r="48.500" fill="none" stroke="#434a54" stroke-width="11.500"/>
        <rect x="1816" y="361.500" width="47" height="47" fill="#aeb0b3"/><rect x="1825.500" y="371" width="28" height="28" fill="#a3a8ad"/>
        <text class="face" x="1839" y="389" textLength="20" lengthAdjust="spacingAndGlyphs">TOP</text>
        <text class="compass" x="1839" y="341">N</text><text class="compass" x="1788" y="391">W</text>
        <text class="compass" x="1890" y="391">E</text><text class="compass" x="1839" y="443">S</text>
        <rect x="1804.500" y="463.500" width="69" height="25" rx="4" fill="#8d909b" stroke="#a4a7b0"/>
        <text class="ucs" x="1811" y="481" font-size="16" textLength="35">WCS</text><path d="M1855 473H1865L1860 478Z" stroke="#a4a7b0" fill="none"/>
      </g>
      <g>
        <rect x="1864" y="523" width="46" height="311" rx="3" fill="#5a606a"/>
        <g stroke="#444953" stroke-width="1.6" fill="none">
          <circle cx="1901" cy="530" r="3.500"/><circle cx="1900" cy="825" r="3.500"/>
          <path d="M1887 548H1902V564A15.500 15.500 0 1 1 1887 548Z"/><circle cx="1886.500" cy="564" r="9"/>
          <path d="M1880 643C1872 634 1870 627 1871 625C1874 624 1876 629 1880 632L1877 615C1878 612 1880 612 1882 616L1884 627L1885 612C1887 609 1889 610 1889 613L1889 627L1893 613C1895 611 1897 613 1896 616L1894 629L1899 621C1901 619 1903 620 1902 623C1899 631 1898 640 1893 645H1883"/>
          <path d="M1870 655L1888 673M1892 655L1870 676M1870 661V655H1876M1886 655H1892V661M1870 670V676H1876"/><circle cx="1894" cy="676" r="7.500"/><path d="M1899 682L1904 687" stroke-width="3.500"/>
          <path d="M1883 741V720H1880L1886 712L1892 720H1889V741ZM1881 725C1864 728 1868 735 1878 735M1891 724C1908 727 1904 735 1889 735"/><path d="M1874 734L1881 730V739Z" fill="#444953"/>
          <path d="M1869.500 773.500H1878.500V783.500H1869.500ZM1881.500 773.500H1890.500V783.500H1881.500ZM1893.500 773.500H1902.500V783.500H1893.500ZM1870 787H1893V806H1870Z"/><path d="M1877 791V801L1886 796Z" fill="#444953"/>
        </g>
        <path d="M1884 593H1891L1887.500 597ZM1884 698H1891L1887.500 702ZM1884 755H1891L1887.500 759Z" fill="#444953"/>
      </g>
    `;
  }

  render() {
    return html`
      <svg class="model" width="1908" height="641" viewBox="6 311 1908 641">
        ${this.grid()}${this.sheetFrame()}${this.titleBlock()}
        <text class="tag" x="13" y="336" textLength="187">[−][Top][2D Wireframe]</text>
        <path d="M1250 486.500H1347M1298.500 438V535" stroke="#fff" stroke-width="1.1"/>
        <rect x="1294.500" y="482.500" width="8" height="8" fill="#212830" stroke="#fff"/>
        <path d="M28.500 858V933M28.500 933.500H104M22.500 926.500H35.500V939.500H22.500ZM30 835L39.500 845M49 835L39.500 845V854M108 913L127 932M127 913L108 932" stroke="#eef0f2" fill="none" stroke-width="1.2"/>
        ${this.viewTools()}
      </svg>
      <div class="command">
        ${icon(3, 27, svg`<path d="M1.500 0V27" stroke="#d8dade" stroke-width="2" stroke-dasharray="2 2.800"/>`)}
        ${icon(14, 14, svg`<path d="M1 1L13 13M13 1L1 13" stroke="#b6b9bf" stroke-width="3"/>`)}
        ${icon(24, 24, svg`<path d="M2 22L14 9" stroke="#b0b3ba" stroke-width="4" stroke-linecap="round"/><path d="M19 1L15 5L19 9L23 5C23 11 18 13 14 11C11 8 13 2 19 1Z" fill="#b0b3ba"/>`)}
        <div class="input">
          ${icon(24, 18, svg`<rect x=".5" y=".5" width="23" height="17" stroke="#55575c" stroke-width="1.3"/><path d="M1 3H23" stroke="#55575c" stroke-width="4"/><path d="M3 8L7 10.500L3 13M8 14H13" stroke="#55575c"/>`)}
          <span class="drop">${caret(11, 6, '#55575c')}</span>
          <span>Type a command</span>
          <span class="up">${icon(10, 6, svg`<path d="M0 6L5 0L10 6Z" fill="#55575c"/>`)}</span>
        </div>
      </div>
    `;
  }
}

const hamburger = (w: number, h: number) =>
  icon(w, h, svg`<path d="M0 1.500H${w}M0 ${h / 2}H${w}M0 ${h - 1.5}H${w}" stroke="#dcdfe4" stroke-width="3"/>`);
const slash = icon(12, 26, svg`<path d="M1 26L11 0" stroke="#50565f" stroke-width="1.5"/>`);
const plus = (s: number, w = 3) => icon(s, s, svg`<path d="M0 ${s / 2}H${s}M${s / 2} 0V${s}" stroke="#dcdfe4" stroke-width=${w}/>`);
const compassMark = (extra: unknown) =>
  icon(26, 26, svg`<path d="M12 2L15 12L23 24L16 21L12 18L8 21L1 24L9 12Z" fill="#e6e8ec"/>${extra}`);

interface StatusGroup {
  w: number;
  gap: number;
  items: [number, unknown, boolean?][];
}

const STATUS: StatusGroup[] = [
  { w: 72, gap: 7, items: [[72, 'MODEL']] },
  {
    w: 95, gap: 6, items: [
      [34, icon(24, 24, svg`<path d="M6 0V24M12 0V24M18 0V24M0 6H24M0 12H24M0 18H24" stroke="#fff" stroke-width="1.4"/>`), true],
      [37, icon(18, 18, svg`<path d="M0 1.500H18M0 9H18M0 16.500H18" stroke="#e6e8ec" stroke-width="3" stroke-dasharray="3 4.500"/>`)],
      [24, caret(11, 7)],
    ],
  },
  {
    w: 255, gap: 6, items: [
      [37, icon(24, 24, svg`<path d="M1 0V23H24M1 16H8V23" stroke="#e6e8ec" stroke-width="1.4"/>`)],
      [34, icon(25, 24, svg`<circle cx="10.500" cy="13" r="9.500" stroke="#fff" stroke-width="1.4"/><path d="M10 13L19 2M10 13H25" stroke="#fff" stroke-width="1.4"/><path d="M17 9C19 11 19 14 18 16" stroke="#fff"/>`), true],
      [25, caret(11, 7)],
      [38, icon(22, 24, svg`<path d="M11 0V24" stroke="#5bb56b" stroke-width="1.4"/><path d="M2 3L20 22" stroke="#b0506a" stroke-width="1.4"/><rect x="8.500" y="10" width="5" height="5" fill="#3b4453" stroke="#fff"/>`)],
      [23, caret(11, 7)],
      [35, icon(25, 22, svg`<path d="M18 1L2 20H25" stroke="#fff" stroke-width="1.4"/><rect x="8" y="9" width="4" height="4" fill="#fff"/>`), true],
      [37, icon(25, 26, svg`<path d="M9 4H23V25H4V9" stroke="#fff" stroke-width="1.4"/><rect x="1" y="1" width="6" height="6" stroke="#fff" stroke-width="1.4"/>`), true],
      [24, caret(11, 7)],
    ],
  },
  {
    w: 158, gap: 6, items: [
      [34, compassMark(svg`<circle cx="21" cy="6" r="4" stroke="#fff" stroke-width="1.3"/>`), true],
      [38, compassMark(svg`<path d="M22 0L17 7H20L18 12L25 5H21Z" fill="#e6e8ec"/>`)],
      [35, compassMark(nothing)],
      [32, '1:1'],
      [17, caret(11, 7)],
    ],
  },
  {
    w: 60, gap: 3, items: [
      [36, icon(24, 24, svg`<circle cx="12" cy="12" r="6.500" stroke="#dcdfe4" stroke-width="4.500"/><circle cx="12" cy="12" r="10.500" stroke="#dcdfe4" stroke-width="3" stroke-dasharray="4.100 4.146"/>`)],
      [24, caret(11, 7)],
    ],
  },
  { w: 36, gap: 5, items: [[36, plus(23, 2.6)]] },
  {
    w: 147, gap: 5, items: [
      [38, icon(12, 22, svg`<path d="M0 0H12V3H7V5H12V8H9V10H12V13H7V15H12V17H9V19H12V22H0Z" fill="#dcdfe4"/>`)],
      [79, 'Decimal'],
      [30, caret(11, 7)],
    ],
  },
  { w: 36, gap: 4, items: [[36, icon(24, 24, svg`<rect x="1" y="1" width="9" height="9" stroke="#dcdfe4" stroke-width="1.3"/><circle cx="18.500" cy="11" r="5" stroke="#dcdfe4" stroke-width="1.3"/><path d="M10 15L15.500 23H4.500Z" stroke="#dcdfe4" stroke-width="1.3"/>`)]] },
  {
    w: 44, gap: 4, items: [
      [42, icon(38, 36, svg`<path d="M1 0H24L31 8V25H1Z" fill="#2f6ab8"/><circle cx="20" cy="13" r="11" fill="#2a5a9e"/><path d="M23 0L31 8H23Z" fill="#a9bddb"/><path d="M1 8H24M9 0V22" stroke="#d6e4f5" stroke-width="2"/><circle cx="9" cy="8" r="3.500" fill="#2f6ab8" stroke="#fff" stroke-width="2"/><path d="M1 21H15L12 26L15 32H1Z" fill="#f5ae2a"/><path d="M18 27L24 33L37 20" stroke="#4fae50" stroke-width="5"/>`)],
    ],
  },
  { w: 35, gap: 4, items: [[35, icon(24, 18, svg`<rect x=".7" y=".7" width="22.600" height="16.600" stroke="#dcdfe4" stroke-width="1.3"/><path d="M4 14L9 9M20 4L15 9" stroke="#dcdfe4" stroke-dasharray="5 1"/><path d="M3 10V15H8ZM21 8V3H16Z" fill="#dcdfe4"/>`)]] },
  { w: 36, gap: 0, items: [[36, hamburger(24, 22)]] },
];

const chrome = svg`
  <circle cx="18" cy="18" r="17.500" fill="#e8453c"/>
  <path d="M3 9A17.500 17.500 0 0 0 18 35.500L25.500 22L18 18Z" fill="#2da94f"/>
  <path d="M18 35.500A17.500 17.500 0 0 0 33.500 10H18L25.500 22Z" fill="#fdbd00"/>
  <path d="M3 9L10.500 22L18 10H33.500A17.500 17.500 0 0 0 3 9Z" fill="#e8453c"/>
  <circle cx="18" cy="18" r="8.500" fill="#fff"/><circle cx="18" cy="18" r="6.800" fill="#3b82f0"/>`;

interface TaskApp {
  art: unknown;
  badge?: unknown;
  badgeClass?: string;
  run?: boolean;
  active?: boolean;
}

const APPS: TaskApp[] = [
  { run: true, art: svg`<path d="M0 3Q0 1 2 1H12L16 5H34V16H0Z" fill="#e0a010"/><path d="M0 7H34Q36 7 36 9V33H0Z" fill="#ffd04a"/><path d="M5 34V27Q5 23 9 23H26Q30 23 30 27V34Z" fill="#0f6fc4"/><path d="M11 29H24" stroke="#0a4a90" stroke-width="2.500"/>` },
  { art: svg`<path d="M6 12L21 2L36 14V30Q36 33 33 33H12Z" fill="#1a8be0"/><path d="M14 33L36 16V31Q36 34 33 34H14Z" fill="#5cd0f5"/><path d="M17 22L30 6L36 13L20 28Z" fill="#1455b0"/><rect y="9" width="18" height="19" rx="2" fill="#0f62c8"/><text x="9" y="24" text-anchor="middle" font-size="15" font-weight="700" fill="#fff">O</text>` },
  { run: true, art: chrome, badgeClass: 'photo', badge: icon(24, 24, svg`<circle cx="12" cy="12" r="12" fill="#1d2c8c"/><path d="M2 7C5 -1 17 -1 20 4L23 12" stroke="#cfd8f5" stroke-width="2.500"/><path d="M10 10H16V22H12Z" fill="#c3cdf0"/><circle cx="4" cy="8" r="2" fill="#e8ecff"/>`) },
  { art: svg`<circle cx="18" cy="20" r="15.500" fill="#ff5a2c"/><path d="M3 22C1 12 5 8 6 5L11 10C16 8 18 3 19 0C25 4 35 10 34 22A16 16 0 0 1 20 35Q30 25 22 12Z" fill="#ffc12e"/><path d="M4 26A15.500 15.500 0 0 0 30 30Q18 34 4 26Z" fill="#e62a72"/><circle cx="18" cy="19" r="7.500" fill="#7a3fd8"/><path d="M8 13Q14 12 19 18Q12 18 11 22Q8 18 8 13Z" fill="#ff9a2e"/>` },
  { art: svg`<rect width="36" height="36" fill="#1c3cb4"/><text x="19" y="27" text-anchor="middle" font-size="27" font-weight="700" fill="#fff">L</text>` },
  { art: svg`<path d="M7 1L35 8L29 35L1 28Z" fill="#c3c8ce"/><path d="M14 13L23 15L21 24L12 22Z" fill="#26282b"/>` },
  { run: true, art: svg`<circle cx="18" cy="18" r="17.500" fill="#1478cc"/><path d="M1 15C3 -3 32 -5 35.500 16C36 24 27 26 22 23C26 16 18 9 10 13C6 14 3 17 1 21Z" fill="#37c6c0"/><path d="M22 1C32 4 37 12 35 20C32 25 27 25 22 23C28 14 26 5 16 2Z" fill="#5fd86a"/><path d="M14 16C8 26 18 36 31 30C27 37 16 37 10 32C4 26 6 17 14 16Z" fill="#0c4f9e"/><circle cx="19" cy="18" r="5" fill="#1c2a3a"/>` },
  { run: true, badge: '99+', badgeClass: 'count', art: svg`<path d="M3 34L5.500 26A15 15 0 1 1 11 31.500Z" stroke="#2fd566" stroke-width="3.200"/><path d="M12 11C14 9 16 14 15 16C16 20 19 22 21 22C23 20 28 24 25 26C18 29 8 18 12 11Z" fill="#2fd566"/>` },
  { active: true, art: svg`<path d="M2 4L7 0V32L2 36Z" fill="#f4849c"/><rect x="5" width="29" height="27" fill="#ea1553"/><path d="M5 26H34V36H2Z" fill="#8c0b31"/><text x="20" y="20" text-anchor="middle" font-size="19" font-weight="700" fill="#fff">A</text><text x="20" y="34" text-anchor="middle" font-size="8" font-weight="700" fill="#fff">CAD</text>` },
  { run: true, art: chrome, badge: 'n', badgeClass: 'letter' },
];

@customElement('task-bar')
class TaskBar extends LitElement {
  static styles = css`
    :host {
      display: grid;
      grid-template-columns: 428px 66px 338px 660px 1fr auto;
      height: 72px;
      background: linear-gradient(to right, #262622, #242424 40%, #262626);
      font: 17px "Open Sans", sans-serif;
      color: #fff;
    }
    .icon { display: block; overflow: visible; }
    .weather { display: flex; gap: 11px; padding: 8px 0 0 29px; line-height: 24px; height: 50px; }
    .weather .text { padding-top: 3px; letter-spacing: .1px; }
    .weather .sub { color: #c4c4c2; }
    .weather .icon text { font-size: 16px; }
    .start { padding: 19px 0 0 16px; }
    .pill {
      box-sizing: border-box;
      display: flex;
      align-items: center;
      width: 331px;
      height: 48px;
      margin: 12px 0 0 5px;
      padding: 0 8px 0 17px;
      gap: 15px;
      background: #404040;
      border: 1px solid #5a5a5a;
      border-radius: 24px;
      color: #d6d6d6;
      font-size: 18px;
    }
    .pill .art { margin-left: auto; }
    .apps { display: grid; grid-template-columns: repeat(10, 66px); }
    .app {
      position: relative;
      box-sizing: border-box;
      display: grid;
      row-gap: 7px;
      align-content: start;
      justify-items: center;
      width: 58px;
      height: 61px;
      margin: 5px 0 0 4px;
      padding-top: 13px;
      border-radius: 5px;
    }
    .app.active { background: #333333; box-shadow: inset 0 0 0 1px #3f3f3f; }
    .mark { width: 10px; height: 5px; border-radius: 3px; background: #9b9894; }
    .active .mark { width: 24px; background: #ff8a6a; }
    .badge { position: absolute; top: 6px; right: 4px; }
    .count { padding: 0 6px; height: 25px; line-height: 24px; border-radius: 11px; background: #f98a6e; color: #3a1a12; font-size: 16px; right: -5px; }
    .letter { width: 24px; height: 24px; line-height: 21px; border-radius: 12px; background: #07544a; color: #9fc7bc; font-size: 17px; text-align: center; }
    .tray { display: flex; gap: 12px; align-items: center; justify-content: flex-end; height: 70px; padding-right: 25px; }
    .tray .up { margin-right: 15px; }
    .clock { padding: 12px 29px 0 0; text-align: right; line-height: 24px; letter-spacing: .15px; }
  `;

  render() {
    return html`
      <div class="weather">
        ${icon(36, 50, svg`
          <rect x="1" y="13" width="8" height="27" fill="#35a4dc"/><path d="M4 18h3M4 24h3M4 30h3M4 36h3" stroke="#1d6fa0" stroke-width="2"/>
          <path d="M24.500 14C29 22 36 27 36 35A11.500 11.500 0 0 1 13 35C13 27 20 22 24.500 14Z" fill="#2f9be0"/>
          <circle cx="29" cy="13" r="12" fill="#ff97a0"/><text x="29.500" y="19" text-anchor="middle" fill="#2a1216">1</text>`)}
        <div class="text"><div>Lembab</div><div class="sub">Sekarang</div></div>
      </div>
      <div class="start">
        ${icon(36, 36, svg`
          <defs><linearGradient id="win" x2="1" y2="1"><stop stop-color="#8be3ff"/><stop offset="1" stop-color="#0a86f0"/></linearGradient></defs>
          <path d="M0 1Q0 0 1 0H17V17H0ZM18.500 0H35Q36 0 36 1V17H18.500ZM0 18.500H17V36H1Q0 36 0 35ZM18.500 18.500H36V35Q36 36 35 36H18.500Z" fill="url(#win)"/>`)}
      </div>
      <div class="pill">
        ${icon(22, 24, svg`<circle cx="10" cy="10" r="8.500" stroke="#f0f0f0" stroke-width="2.400"/><path d="M16 17L21 23" stroke="#f0f0f0" stroke-width="2.800"/>`)}
        <span>Search</span>
        <span class="art">${icon(68, 40, svg`
          <defs>
            <clipPath id="round"><path d="M4 8Q30 -4 58 6Q66 12 67 22Q68 34 60 38Q30 42 8 36Q-4 22 4 8Z"/></clipPath>
            <linearGradient id="sky" x2="1" y2=".6"><stop stop-color="#20307a"/><stop offset=".5" stop-color="#8a22c8"/><stop offset="1" stop-color="#182a80"/></linearGradient>
          </defs>
          <g clip-path="url(#round)">
            <rect width="68" height="40" fill="url(#sky)"/><rect y="30" width="68" height="10" fill="#1f8cf0"/>
            <path d="M6 32C8 24 12 20 16 14C18 8 24 3 30 3C28 12 20 24 12 32Z" fill="#4a56a0"/>
            <path d="M18 36C18 20 24 13 36 13C48 14 52 26 56 35L38 36C38 27 29 26 27 36Z" fill="#9a8ad0"/>
            <path d="M25 16C36 9 48 14 53 28C46 18 38 16 25 16Z" fill="#9fc04a"/>
            <path d="M36 20C42 21 46 27 47 33" stroke="#7466b4" stroke-width="2"/>
            <path d="M22 4l2 3M28 2l1 2M14 18l2 2M20 11l2 1M4 24l2 2M17 14l2 2M12 24l2 1" stroke="#e6e2ff" stroke-width="2"/>
            <path d="M2 33H18M24 37H46M50 33H66" stroke="#6fd0ff" stroke-width="1.500"/>
          </g>`)}</span>
      </div>
      <div class="apps">
        ${APPS.map((a) => html`
          <div class="app ${a.active ? 'active' : ''}">
            ${icon(36, 36, a.art)}
            ${a.run || a.active ? html`<span class="mark"></span>` : nothing}
            ${a.badge ? html`<span class="badge ${a.badgeClass}">${a.badge}</span>` : nothing}
          </div>
        `)}
      </div>
      <div class="tray">
        <span class="up">${icon(16, 9, svg`<path d="M1 8.500L8 1.500L15 8.500" stroke="#fff" stroke-width="2"/>`)}</span>
        ${icon(25, 20, svg`<path d="M1 8C8 0 17 0 24 8M4.500 12C9 6.500 16 6.500 20.500 12M8.500 15.500C11 12.500 14 12.500 16.500 15.500" stroke="#fff" stroke-width="2"/><circle cx="12.500" cy="17.500" r="2" fill="#fff"/>`)}
        ${icon(22, 20, svg`<path d="M1 7H5L10 2V18L5 13H1Z" stroke="#fff" stroke-width="1.800"/><path d="M13 6.500Q15 10 13 13.500M16 4Q20 10 16 16" stroke="#fff" stroke-width="1.800"/><path d="M19 2Q24 10 19 18" stroke="#777" stroke-width="1.600"/>`)}
        ${icon(24, 16, svg`<rect x="1" y="1" width="19" height="14" rx="3" stroke="#fff" stroke-width="1.800"/><rect x="3.500" y="3.500" width="11" height="9" fill="#fff"/><path d="M22 5V11" stroke="#fff" stroke-width="2.500"/>`)}
      </div>
      <div class="clock">10:40<br />26/06/2025</div>
    `;
  }
}

@customElement('app-root')
class AppRoot extends LitElement {
  static styles = css`
    :host {
      display: block;
      width: 1920px;
      height: 1080px;
      overflow: hidden;
      background: linear-gradient(#3a1518 182px, #d6d2c4 182px, #e6e4dc 100%);
      font: 17px "Open Sans", sans-serif;
      color: #f0f2f5;
    }
    .icon { display: block; flex: none; }
    .window {
      box-sizing: border-box;
      width: 1916px;
      height: 1008px;
      margin-left: 4px;
      border: 2px solid #0d94dc;
      border-radius: 10px;
      background: #222831;
      overflow: hidden;
    }
    .files, .layouts { display: grid; align-items: center; letter-spacing: -.25px; white-space: nowrap; }
    .files { height: 41px; padding-left: 29px; grid-template-columns: 39px 24px 41px 304px 21px 37px 1fr; }
    .files > * { margin-top: 5px; }
    .files .current, .layouts .current {
      display: flex;
      align-items: center;
      justify-content: space-between;
      box-sizing: border-box;
      background: #3b4453;
      color: #fff;
      font-weight: 700;
    }
    .files .current {
      align-self: end;
      width: 304px;
      height: 36px;
      margin: 0 0 0 6px;
      padding: 0 17px 0 25px;
      clip-path: polygon(14px 0, 100% 0, calc(100% - 14px) 100%, 0 100%);
      letter-spacing: .02px;
    }
    .layouts { height: 48px; padding-left: 29px; grid-template-columns: 38px 115px 76px 23px 76px 26px 37px 1fr; align-items: start; }
    .layouts > * { margin-top: 7px; }
    .layouts > .icon:first-child { margin-top: 8px; }
    .layouts .current {
      width: 105px;
      height: 36px;
      margin-top: 0;
      padding: 2px 0 0 26px;
      clip-path: polygon(13px 0, 100% 0, calc(100% - 14px) 100%, 0 100%);
    }
    .rule { height: 6px; width: 1903px; margin-left: 4px; background: #3b4453; }
    .bottom { display: flex; justify-content: space-between; }
    .status { display: flex; height: 36px; margin: 3px 5px 0 0; }
    .group { display: flex; background: #39414f; font-size: 17px; }
    .cell { display: grid; place-items: center; }
    .cell.on { background: #5b88bb; }
    .cell.on + .cell.on { box-shadow: inset 2px 0 #39414f; }
  `;

  render() {
    return html`
      <div class="window">
        <title-bar></title-bar>
        <ribbon-bar></ribbon-bar>
        <div class="files">
          ${hamburger(24, 19)}${slash}<span>Start</span>
          <div class="current">
            kepala gambar autocad A3*
            ${icon(13, 13, svg`<path d="M1 1L12 12M12 1L1 12" stroke="#aeb3bc" stroke-width="2.200"/>`)}
          </div>
          <span></span>${plus(22)}${slash}
        </div>
        <div class="rule"></div>
        <drawing-canvas></drawing-canvas>
        <div class="rule"></div>
        <div class="bottom">
          <div class="layouts">
            ${hamburger(24, 19)}
            <div class="current">Model</div>
            <span>Layout1</span>${slash}<span>Layout2</span>${slash}${plus(22)}${slash}
          </div>
          <div class="status">
            ${STATUS.map((g) => html`
              <div class="group" style="width:${g.w}px;margin-right:${g.gap}px">
                ${g.items.map(([w, content, on]) => html`<div class="cell ${on ? 'on' : ''}" style="width:${w}px">${content}</div>`)}
              </div>
            `)}
          </div>
        </div>
      </div>
      <task-bar></task-bar>
    `;
  }
}
